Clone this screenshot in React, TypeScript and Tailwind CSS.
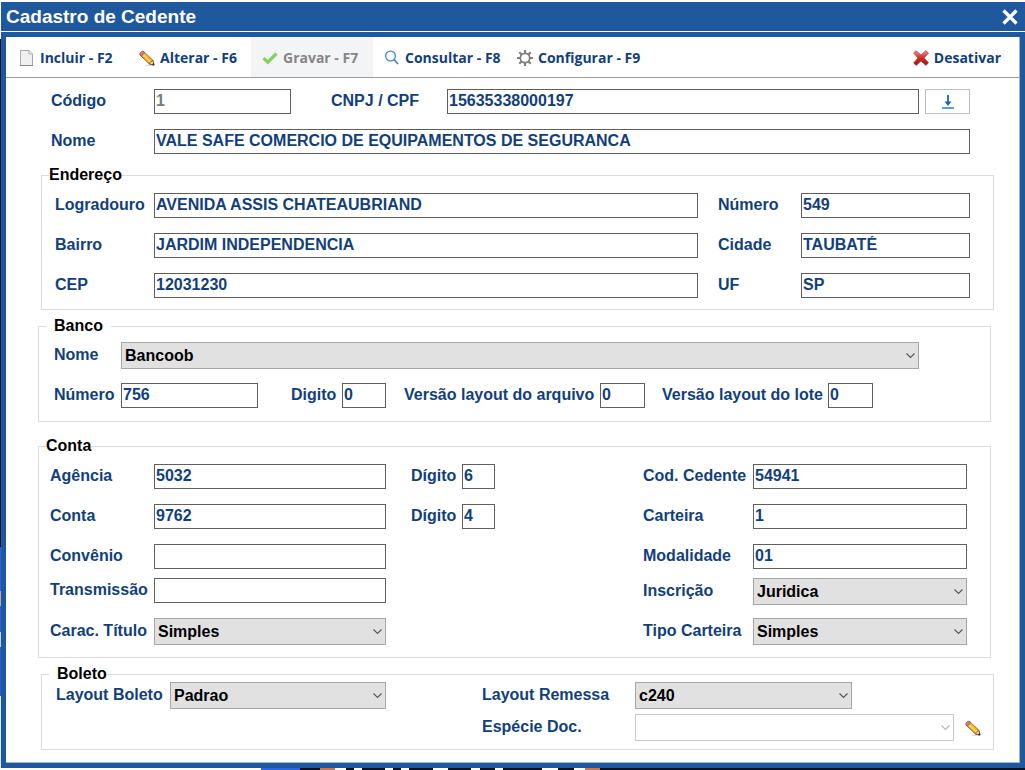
import { useId } from 'react';
import type { ReactNode } from 'react';
import clsx from 'clsx';

const LEFT_EDGE = [
  { size: 37, className: 'bg-white' },
  { size: 511, className: 'bg-[#05122e]' },
  { size: 44, className: 'bg-[#2464e0]' },
  { size: 15, className: 'bg-[#c4a3a8]' },
  { size: 26, className: 'bg-[#2464e0]' },
  { size: 15, className: 'bg-[#bcd3f5]' },
  { size: 50, className: 'bg-[#1f5fd0]' },
  { size: 72, className: 'bg-[#dfe9f5]' },
];

const BOTTOM_EDGE = [
  { size: 261, className: 'bg-white' },
  { size: 39, className: 'bg-[#2b66e6]' },
  { size: 20, className: 'bg-[#0a1120]' },
  { size: 15, className: 'bg-[#cf7446]' },
  { size: 11, className: 'bg-white' },
  { size: 8, className: 'bg-[#0a1120]' },
  { size: 8, className: 'bg-white' },
  { size: 23, className: 'bg-[#0a1120]' },
  { size: 8, className: 'bg-white' },
  { size: 8, className: 'bg-[#0a1120]' },
  { size: 8, className: 'bg-white' },
  { size: 24, className: 'bg-[#0a1120]' },
  { size: 15, className: 'bg-white' },
  { size: 23, className: 'bg-[#0a1120]' },
  { size: 9, className: 'bg-white' },
  { size: 15, className: 'bg-[#0a1120]' },
  { size: 8, className: 'bg-white' },
  { size: 39, className: 'bg-[#0a1120]' },
  { size: 16, className: 'bg-white' },
  { size: 16, className: 'bg-[#0a1120]' },
  { size: 11, className: 'bg-white' },
  { size: 15, className: 'bg-[#cf7446]' },
  { size: 425, className: 'bg-[#0a1120]' },
];

function PageIcon() {
  return (
    <svg width="16" height="16" viewBox="0 0 16 16" aria-hidden="true">
      <path d="M1.500.5h8.700L13.500 3.800V15.500h-12z" fill="#f0f0f0" stroke="#a9a9a9" />
      <path d="M10 .5v3.500h3.500" fill="#fff" stroke="#a9a9a9" />
      <path d="M1 15.500h13" stroke="#858585" />
    </svg>
  );
}

function PencilIcon() {
  return (
    <svg width="16" height="16" viewBox="0 0 16 16" aria-hidden="true">
      <path d="M7 15.300h8.500" stroke="#b9b9b9" strokeWidth="1" opacity=".7" />
      <path d="M4.500 1.500 14 10.500 15 15 10.500 14 1 5z" fill="#f5b32c" stroke="#8a5413" strokeWidth=".9" />
      <path d="M3.800 4.400 12.300 12.500" stroke="#ffe07a" strokeWidth="1.300" />
      <path d="M6 3 14 10.700" stroke="#d98a1b" strokeWidth="1" />
      <path d="M14 10.500 15 15 10.500 14 11.200 12.200z" fill="#f2d7a6" stroke="#6b4515" strokeWidth=".7" />
      <path d="M15.200 15.200 12.900 14.600 14.600 13z" fill="#2a2119" />
      <path d="M1 5C-.2 3.500 2.800.3 4.500 1.500L5.600 2.500 2.200 6z" fill="#df7a6e" stroke="#a04238" strokeWidth=".7" />
      <path d="M5 2.200 1.900 5.400M6 3.100 2.900 6.300" stroke="#9a8f84" strokeWidth=".8" />
    </svg>
  );
}

function CheckIcon() {
  return (
    <svg width="16" height="16" viewBox="0 0 16 16" aria-hidden="true">
      <path d="M1.500 8.200 5.800 12.200 14.500 3.500" fill="none" stroke="#7fd25c" strokeWidth="3.200" />
    </svg>
  );
}

function SearchIcon() {
  return (
    <svg width="16" height="16" viewBox="0 0 16 16" fill="none" stroke="#4489d0" aria-hidden="true">
      <circle cx="6.500" cy="6" r="4.900" strokeWidth="1.300" />
      <path d="M10 9.700 14 14" strokeWidth="1.700" />
    </svg>
  );
}

function GearIcon() {
  return (
    <svg width="16" height="16" viewBox="0 0 16 16" fill="none" stroke="#7d7d7d" aria-hidden="true">
      <circle cx="8" cy="8" r="4.700" strokeWidth="1.700" />
      <path
        d="M8 0v3.500M8 12.500V16M0 8h3.500M12.500 8H16M2.300 2.300l2.500 2.500M11.200 11.200l2.500 2.500M13.700 2.300l-2.500 2.500M4.800 11.200l-2.500 2.500"
        strokeWidth="2.100"
      />
    </svg>
  );
}

function RedCrossIcon() {
  return (
    <svg width="16" height="16" viewBox="0 0 16 16" aria-hidden="true">
      <defs>
        <linearGradient id="cross" x1="0" y1="0" x2="0" y2="1">
          <stop offset="0" stopColor="#e9968f" />
          <stop offset=".5" stopColor="#d22a22" />
          <stop offset="1" stopColor="#a3140f" />
        </linearGradient>
      </defs>
      <path
        d="M3 .7 8 5 12.800.7 15.500 3 11 8l4.500 4.700L13 15.400 8 11l-4.800 4.400L.6 13 5 8 .6 3z"
        fill="url(#cross)"
        stroke="#9d3a35"
        strokeWidth=".7"
        strokeLinejoin="round"
      />
    </svg>
  );
}

function DownloadIcon() {
  return (
    <svg width="14" height="14" viewBox="0 0 14 14" aria-hidden="true">
      <path d="M7 0v8" stroke="#2f74b5" strokeWidth="2" />
      <path d="M3.500 6.500h7L7 11z" fill="#2068ad" />
      <path d="M1 13h12" stroke="#5aa0d8" strokeWidth="2" />
    </svg>
  );
}

interface EdgeProps {
  parts: { size: number; className: string }[];
  className: string;
}

// Sliver of the desktop that shows beside the window
function Edge({ parts, className }: EdgeProps) {
  return (
    <div className={clsx('flex', className)} aria-hidden="true">
      {parts.map((part, i) => (
        <div key={i} className={clsx('basis-0', part.className)} style={{ flexGrow: part.size }} />
      ))}
    </div>
  );
}

interface ToolButtonProps {
  icon: ReactNode;
  label: string;
  className?: string;
  disabled?: boolean;
}

function ToolButton({ icon, label, className, disabled }: ToolButtonProps) {
  return (
    <button
      type="button"
      disabled={disabled}
      className={clsx(
        "flex items-center gap-[5px] pt-[2px] pl-[11px] font-['Open_Sans',sans-serif] text-sm font-bold whitespace-nowrap",
        disabled ? 'bg-[#f3f4f6] text-[#858585]' : 'text-[#123f7c]',
        className,
      )}
    >
      {icon}
      {label}
    </button>
  );
}

interface FieldProps {
  label: string;
  labelClass: string;
  fieldClass: string;
  value?: string;
  disabled?: boolean;
}

function TextField({ label, labelClass, fieldClass, value = '', disabled }: FieldProps) {
  const id = useId();
  return (
    <>
      <label htmlFor={id} className={clsx('shrink-0 leading-6 whitespace-nowrap', labelClass)}>
        {label}
      </label>
      <input
        id={id}
        type="text"
        defaultValue={value}
        disabled={disabled}
        className={clsx(
          'h-[25px] min-w-0 border border-[#5f5f5f] bg-white px-px pb-[2px] font-bold outline-none',
          disabled && 'text-[#7b7b7b]',
          fieldClass,
        )}
      />
    </>
  );
}

function SelectField({ label, labelClass, fieldClass, value = '', disabled }: FieldProps) {
  const id = useId();
  return (
    <>
      <label htmlFor={id} className={clsx('shrink-0 leading-[26px] whitespace-nowrap', labelClass)}>
        {label}
      </label>
      <div className={clsx('relative min-w-0', fieldClass)}>
        <select
          id={id}
          defaultValue={value}
          disabled={disabled}
          className={clsx(
            'block h-[27px] w-full appearance-none border pl-[3px] font-bold text-black outline-none',
            disabled ? 'border-[#c8c8c8] bg-white' : 'border-[#a6a6a6] bg-[#e1e1e1]',
          )}
        >
          <option value={value}>{value}</option>
        </select>
        <svg
          viewBox="0 0 9 6"
          className="pointer-events-none absolute top-[11px] right-[4px] h-[6px] w-[9px]"
          fill="none"
          stroke={disabled ? '#b5b5b5' : '#555'}
          aria-hidden="true"
        >
          <path d="M.5.5l4 4 4-4" strokeWidth="1.100" />
        </svg>
      </div>
    </>
  );
}

interface GroupProps {
  title: string;
  className: string;
  legendClass: string;
  children: ReactNode;
}

function Group({ title, className, legendClass, children }: GroupProps) {
  return (
    <fieldset className={clsx('min-w-0 border border-[#dcdcdc]', className)}>
      <legend className={clsx('leading-5 text-black', legendClass)}>{title}</legend>
      {children}
    </fieldset>
  );
}

export default function App() {
  return (
    <div className="flex min-h-screen flex-col bg-white pt-[2px] font-['Liberation_Sans',Arial,sans-serif] text-base font-bold text-[#123f7c]">
      <div className="flex grow">
        <Edge parts={LEFT_EDGE} className="w-px shrink-0 flex-col" />

        <main className="flex min-w-0 grow flex-col bg-[#1f589c]">
          <header className="flex h-[30px] items-center justify-between border-b border-white pr-[7px] pl-[5px] text-white">
            <h1 className="text-[19px] leading-7">Cadastro de Cedente</h1>
            <button type="button" aria-label="Fechar">
              <svg width="16" height="16" viewBox="0 0 16 16" aria-hidden="true">
                <path d="M1.500 1.500l13 13M14.500 1.500l-13 13" stroke="#fff" strokeWidth="3.200" />
              </svg>
            </button>
          </header>

          <div className="mx-[5px] my-[5px] grow border-r border-b border-[#9fb3cc] bg-white">
            <div className="flex h-[41px] border-b border-[#9b9b9b] pl-[2px]">
              <ToolButton icon={<PageIcon />} label="Incluir - F2" className="w-[120px]" />
              <ToolButton icon={<PencilIcon />} label="Alterar - F6" className="w-[123px]" />
              <ToolButton icon={<CheckIcon />} label="Gravar - F7" className="w-[122px]" disabled />
              <ToolButton icon={<SearchIcon />} label="Consultar - F8" className="w-[133px]" />
              <ToolButton icon={<GearIcon />} label="Configurar - F9" />
              <ToolButton icon={<RedCrossIcon />} label="Desativar" className="mr-[18px] ml-auto" />
            </div>

            <form className="pb-3" onSubmit={(e) => e.preventDefault()}>
              <div className="flex flex-col gap-[15px] pt-[11px] pr-[49px] pl-[45px]">
                <div className="flex">
                  <TextField label="Código" value="1" labelClass="w-[103px]" fieldClass="w-[137px]" disabled />
                  <TextField label="CNPJ / CPF" value="15635338000197" labelClass="ml-10 w-[116px]" fieldClass="grow" />
                  <button
                    type="button"
                    aria-label="Baixar"
                    className="ml-[6px] flex h-[25px] w-[45px] shrink-0 items-center justify-center border border-[#bdbdbd]"
                  >
                    <DownloadIcon />
                  </button>
                </div>
                <div className="flex">
                  <TextField
                    label="Nome"
                    value="VALE SAFE COMERCIO DE EQUIPAMENTOS DE SEGURANCA"
                    labelClass="w-[103px]"
                    fieldClass="grow"
                  />
                </div>
              </div>

              <Group title="Endereço" className="mt-[11px] mr-[25px] ml-[35px]" legendClass="ml-[7px]">
                <div className="flex flex-col gap-[15px] pt-2 pr-[23px] pb-[11px] pl-[13px]">
                  <div className="flex">
                    <TextField label="Logradouro" value="AVENIDA ASSIS CHATEAUBRIAND" labelClass="w-[99px]" fieldClass="grow" />
                    <TextField label="Número" value="549" labelClass="ml-5 w-[83px]" fieldClass="w-[169px]" />
                  </div>
                  <div className="flex">
                    <TextField label="Bairro" value="JARDIM INDEPENDENCIA" labelClass="w-[99px]" fieldClass="grow" />
                    <TextField label="Cidade" value="TAUBATÉ" labelClass="ml-5 w-[83px]" fieldClass="w-[169px]" />
                  </div>
                  <div className="flex">
                    <TextField label="CEP" value="12031230" labelClass="w-[99px]" fieldClass="grow" />
                    <TextField label="UF" value="SP" labelClass="ml-5 w-[83px]" fieldClass="w-[169px]" />
                  </div>
                </div>
              </Group>

              <Group title="Banco" className="mt-[6px] mr-7 ml-8" legendClass="ml-[7px] px-2">
                <div className="flex flex-col gap-[14px] pt-[6px] pb-[13px] pl-[15px]">
                  <div className="flex pr-[71px]">
                    <SelectField label="Nome" value="Bancoob" labelClass="w-[67px]" fieldClass="grow" />
                  </div>
                  <div className="flex">
                    <TextField label="Número" value="756" labelClass="w-[67px]" fieldClass="w-[137px]" />
                    <TextField label="Digito" value="0" labelClass="ml-[33px] w-[51px]" fieldClass="w-11" />
                    <TextField label="Versão layout do arquivo" value="0" labelClass="ml-[18px] w-[196px]" fieldClass="w-[45px]" />
                    <TextField label="Versão layout do lote" value="0" labelClass="ml-[17px] w-[166px]" fieldClass="w-[45px]" />
                  </div>
                </div>
              </Group>

              <Group title="Conta" className="mt-[14px] mr-7 ml-8" legendClass="ml-[7px]">
                <div className="pt-2 pr-[23px] pb-3 pl-[11px]">
                  <div className="mb-[15px] flex">
                    <TextField label="Agência" value="5032" labelClass="w-[104px]" fieldClass="grow" />
                    <div className="flex w-[257px] shrink-0 pl-[25px]">
                      <TextField label="Dígito" value="6" labelClass="w-[51px]" fieldClass="w-[33px]" />
                    </div>
                    <TextField label="Cod. Cedente" value="54941" labelClass="w-[110px]" fieldClass="w-[214px]" />
                  </div>
                  <div className="mb-[15px] flex">
                    <TextField label="Conta" value="9762" labelClass="w-[104px]" fieldClass="grow" />
                    <div className="flex w-[257px] shrink-0 pl-[25px]">
                      <TextField label="Dígito" value="4" labelClass="w-[51px]" fieldClass="w-[33px]" />
                    </div>
                    <TextField label="Carteira" value="1" labelClass="w-[110px]" fieldClass="w-[214px]" />
                  </div>
                  <div className="mb-[9px] flex">
                    <TextField label="Convênio" labelClass="w-[104px]" fieldClass="grow" />
                    <TextField label="Modalidade" value="01" labelClass="ml-[257px] w-[110px]" fieldClass="w-[214px]" />
                  </div>
                  <div className="mb-[13px] flex">
                    <TextField label="Transmissão" labelClass="w-[104px]" fieldClass="grow" />
                    <SelectField label="Inscrição" value="Juridica" labelClass="ml-[257px] w-[110px]" fieldClass="w-[214px]" />
                  </div>
                  <div className="flex">
                    <SelectField label="Carac. Título" value="Simples" labelClass="w-[104px]" fieldClass="grow" />
                    <SelectField label="Tipo Carteira" value="Simples" labelClass="ml-[257px] w-[110px]" fieldClass="w-[214px]" />
                  </div>
                </div>
              </Group>

              <Group title="Boleto" className="mt-[6px] mr-[25px] ml-[35px]" legendClass="ml-[7px] pl-2">
                <div className="-mt-[2px] flex items-start pr-3 pb-2 pl-[14px]">
                  <div className="flex grow">
                    <SelectField label="Layout Boleto" value="Padrao" labelClass="w-[114px]" fieldClass="grow" />
                  </div>
                  <div className="ml-24 flex shrink-0 flex-col gap-[5px]">
                    <div className="flex">
                      <SelectField label="Layout Remessa" value="c240" labelClass="w-[153px]" fieldClass="w-[217px]" />
                    </div>
                    <div className="flex">
                      <SelectField label="Espécie Doc." labelClass="w-[153px]" fieldClass="w-[319px]" disabled />
                      <button type="button" aria-label="Editar espécie" className="ml-[11px]">
                        <PencilIcon />
                      </button>
                    </div>
                  </div>
                </div>
              </Group>
            </form>
          </div>
        </main>
      </div>
      <Edge parts={BOTTOM_EDGE} className="h-[2px] shrink-0" />
    </div>
  );
}
